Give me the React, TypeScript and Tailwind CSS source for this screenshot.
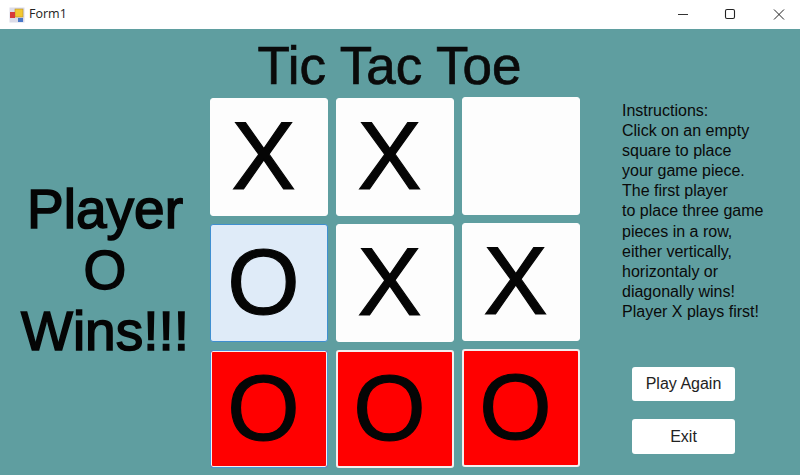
const sans = { fontFamily: '"Liberation Sans", Arial, sans-serif' };

function Cell({ mark, kind = "plain", up = false }: { mark?: string; kind?: "plain" | "focus" | "win" | "winFocus"; up?: boolean }) {
  const looks = {
    plain: "bg-[#fdfdfd] border border-[#fdfdfd]",
    focus: "bg-[#dfebf8] border border-[#3f8fd0]",
    win: "bg-[#ff0000] border-2 border-[#f4efef]",
    winFocus: "bg-[#ff0000] border border-[#4a94d4] shadow-[inset_0_0_0_1px_#f4f0f0]",
  };
  return (
    <div className={`w-[118px] h-[118px] rounded-[3px] flex items-center justify-center pr-[11px] pb-[2px] leading-none text-[#050505] [-webkit-text-stroke:1.2px_#050505] ${mark === "O" ? "text-[93px]" : "text-[96px]"} ${looks[kind]} ${up ? "-translate-y-px" : ""}`}>
      {mark}
    </div>
  );
}

export default function App() {
  return (
    <div className="w-[800px] h-[475px] flex flex-col overflow-hidden bg-[#5f9ea0]" style={sans}>
      <div className="h-[29px] bg-white flex items-center shrink-0 text-[12px] text-[#222]">
        <svg width="16" height="16" viewBox="0 0 16 16" className="ml-[9px] mr-[4px]">
          <rect x="0.5" y="0.5" width="15" height="15" fill="#dcdce8" />
          <rect x="6" y="2" width="8" height="8" fill="#f2c832" stroke="#b8902a" strokeWidth="0.6" />
          <rect x="1" y="5" width="5" height="6" fill="#d83a3a" />
          <rect x="9" y="11" width="5" height="4" fill="#4a78c8" />
        </svg>
        <span className="text-[12.5px]" style={{ fontFamily: '"Open Sans", sans-serif' }}>Form1</span>
        <div className="ml-auto flex items-center">
          <svg width="46" height="29" viewBox="0 0 46 29"><path d="M16 14.5h10" stroke="#333" strokeWidth="1" /></svg>
          <svg width="46" height="29" viewBox="0 0 46 29"><rect x="17.5" y="9.5" width="9" height="9" rx="1.5" fill="none" stroke="#222" strokeWidth="1.1" /></svg>
          <svg width="46" height="29" viewBox="0 0 46 29"><path d="M20 9.5l10 10M30 9.5l-10 10" stroke="#222" strokeWidth="1" /></svg>
        </div>
      </div>
      <div className="flex-1 flex min-h-0">
        <div className="w-[210px] shrink-0 pt-[150px] text-center text-[55px] leading-[61px] text-[#050505] [-webkit-text-stroke:1.6px_#050505]">
          <div>Player</div>
          <div>O</div>
          <div>Wins!!!</div>
        </div>
        <div className="w-[378px] shrink-0">
          <div className="h-[69px] text-center text-[53px] leading-[74px] text-[#0a0a0a] -ml-[19px] whitespace-nowrap [-webkit-text-stroke:0.7px_#0a0a0a]">Tic Tac Toe</div>
          <div className="grid grid-cols-[118px_118px_118px] gap-x-2 gap-y-2">
            <Cell mark="X" />
            <Cell mark="X" />
            <Cell up />
            <Cell mark="O" kind="focus" />
            <Cell mark="X" />
            <Cell mark="X" up />
            <Cell mark="O" kind="winFocus" />
            <Cell mark="O" kind="win" />
            <Cell mark="O" kind="win" up />
          </div>
        </div>
        <div className="flex-1 pl-[34px] pt-[72px]">
          <div className="text-[16px] leading-[20.1px] text-[#0a0a0a] h-[266px] whitespace-nowrap">
            Instructions:<br />
            Click on an empty<br />
            square to place<br />
            your game piece.<br />
            The first player<br />
            to place three game<br />
            pieces in a row,<br />
            either vertically,<br />
            horizontaly or<br />
            diagonally wins!<br />
            Player X plays first!
          </div>
          <div className="flex flex-col gap-[18px] pl-[10px]">
            <div className="w-[103px] h-[34px] bg-white rounded-[3px] flex items-center justify-center text-[16px] text-[#222]">Play Again</div>
            <div className="w-[103px] h-[35px] bg-white rounded-[3px] flex items-center justify-center text-[16px] text-[#222]">Exit</div>
          </div>
        </div>
      </div>
    </div>
  );
}
